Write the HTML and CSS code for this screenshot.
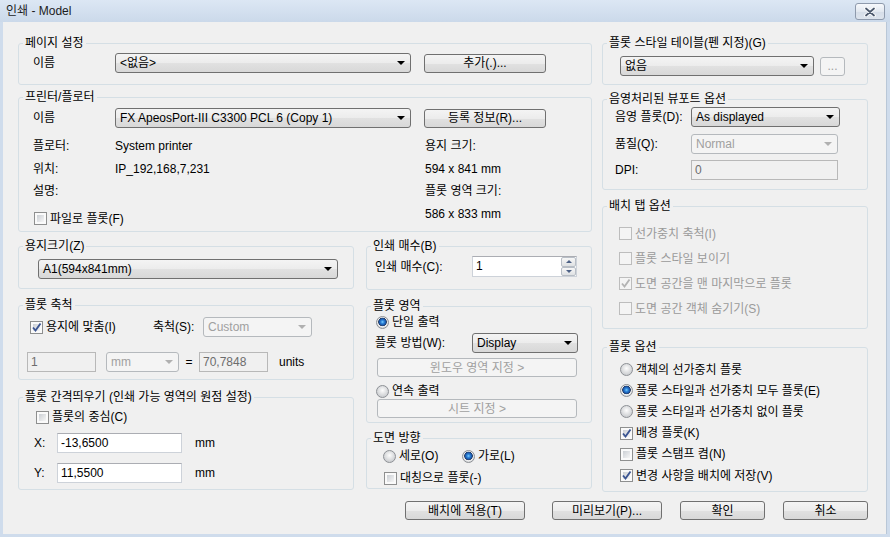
FILE: index.html
```html
<!DOCTYPE html>
<html lang="ko">
<head>
<meta charset="utf-8">
<title>인쇄 - Model</title>
<link rel="stylesheet" href="styles.css">
</head>
<body>
<div class="window">
  <div class="titlebar">
    <span class="title">인쇄 - Model</span>
    <span class="close"><svg width="12" height="10" viewBox="0 0 12 10"><path d="M2 1.5 L10 8.5 M10 1.5 L2 8.5" stroke="#ffffff" stroke-width="3.6" stroke-linecap="round"/><path d="M2 1.5 L10 8.5 M10 1.5 L2 8.5" stroke="#4b586c" stroke-width="1.8" stroke-linecap="round"/></svg></span>
  </div>
  <div class="client">
    <div class="main">
      <div class="left">
        <fieldset class="g-page">
          <legend>페이지 설정</legend>
          <div class="b-page">
            <div class="row">
              <span class="lbl w82">이름</span>
              <div class="combo w296"><span>&lt;없음&gt;</span></div>
              <div class="btn w122 ml13">추가(.)...</div>
            </div>
          </div>
        </fieldset>

        <fieldset class="g-printer">
          <legend>프린터/플로터</legend>
          <div class="b-printer">
            <div class="row">
              <span class="lbl w82">이름</span>
              <div class="combo w296 h21"><span>FX ApeosPort-III C3300 PCL 6 (Copy 1)</span></div>
              <div class="btn w122 ml13">등록 정보(R)...</div>
            </div>
            <div class="info">
              <div class="info-left">
                <div class="irow"><span class="lbl w82">플로터:</span><span>System printer</span></div>
                <div class="irow"><span class="lbl w82">위치:</span><span>IP_192,168,7,231</span></div>
                <div class="irow"><span class="lbl w82">설명:</span><span></span></div>
                <div class="irow cbrow-file"><span class="cb"></span><span class="cbl">파일로 플롯(F)</span></div>
              </div>
              <div class="info-right">
                <div class="irow">용지 크기:</div>
                <div class="irow">594 x 841 mm</div>
                <div class="irow">플롯 영역 크기:</div>
                <div class="irow">586 x 833 mm</div>
              </div>
            </div>
          </div>
        </fieldset>

        <div class="cols">
          <div class="colA">
            <fieldset class="g-paper">
              <legend>용지크기(Z)</legend>
              <div class="b-paper">
                <div class="combo w300"><span>A1(594x841mm)</span></div>
              </div>
            </fieldset>

            <fieldset class="g-scale">
              <legend>플롯 축척</legend>
              <div class="b-scale">
                <div class="row">
                  <div class="cbwrap-fit"><span class="cb"><svg width="11" height="11" viewBox="0 0 11 11"><path d="M2 5.5 L4.5 8.5 L9.5 1.5" stroke="#3b5592" stroke-width="1.9" fill="none"/></svg></span><span class="cbl">용지에 맞춤(I)</span></div>
                  <span class="lbl w50">축척(S):</span>
                  <div class="combo dis w109 h19"><span>Custom</span></div>
                </div>
                <div class="row scale-r2">
                  <div class="edit dis w69">1</div>
                  <div class="combo dis w73 ml10"><span>mm</span></div>
                  <span class="eq">=</span>
                  <div class="edit dis w69">70,7848</div>
                  <span class="units">units</span>
                </div>
              </div>
            </fieldset>

            <fieldset class="g-offset">
              <legend>플롯 간격띄우기 (인쇄 가능 영역의 원점 설정)</legend>
              <div class="b-offset">
                <div class="row cbrow-center"><span class="cb"></span><span class="cbl">플롯의 중심(C)</span></div>
                <div class="row xy-r1">
                  <span class="lbl w23">X:</span>
                  <div class="edit w125">-13,6500</div>
                  <span class="unit-mm">mm</span>
                </div>
                <div class="row xy-r2">
                  <span class="lbl w23">Y:</span>
                  <div class="edit w125">11,5500</div>
                  <span class="unit-mm">mm</span>
                </div>
              </div>
            </fieldset>
          </div>

          <div class="colB">
            <fieldset class="g-copies">
              <legend>인쇄 매수(B)</legend>
              <div class="b-copies">
                <div class="row">
                  <span class="lbl w97">인쇄 매수(C):</span>
                  <div class="spinbox">
                    <span class="spin-text">1</span>
                    <div class="spin"><span class="sb up"></span><span class="sb dn"></span></div>
                  </div>
                </div>
              </div>
            </fieldset>

            <fieldset class="g-area">
              <legend>플롯 영역</legend>
              <div class="b-area">
                <div class="row area-r1"><span class="rb on"></span><span class="cbl">단일 출력</span></div>
                <div class="row area-r2">
                  <span class="lbl w97">플롯 방법(W):</span>
                  <div class="combo w106 h19"><span>Display</span></div>
                </div>
                <div class="btn dis w200 area-b1">윈도우 영역 지정 &gt;</div>
                <div class="row area-r3"><span class="rb"></span><span class="cbl">연속 출력</span></div>
                <div class="btn dis w200 area-b2">시트 지정 &gt;</div>
              </div>
            </fieldset>

            <fieldset class="g-orient">
              <legend>도면 방향</legend>
              <div class="b-orient">
                <div class="row orient-r1">
                  <div class="rbwrap-v"><span class="rb"></span><span class="cbl">세로(O)</span></div>
                  <div class="row"><span class="rb on"></span><span class="cbl">가로(L)</span></div>
                </div>
                <div class="row orient-r2"><span class="cb"></span><span class="cbl">대칭으로 플롯(-)</span></div>
              </div>
            </fieldset>
          </div>
        </div>
      </div>

      <div class="right">
        <fieldset class="g-style">
          <legend>플롯 스타일 테이블(펜 지정)(G)</legend>
          <div class="b-style">
            <div class="row">
              <div class="combo w194 h19"><span>없음</span></div>
              <div class="btn dis w25 ml6">...</div>
            </div>
          </div>
        </fieldset>

        <fieldset class="g-shade">
          <legend>음영처리된 뷰포트 옵션</legend>
          <div class="b-shade">
            <div class="row">
              <span class="lbl w76">음영 플롯(D):</span>
              <div class="combo w149"><span>As displayed</span></div>
            </div>
            <div class="row shade-r2">
              <span class="lbl w76">품질(Q):</span>
              <div class="combo dis w147 h19"><span>Normal</span></div>
            </div>
            <div class="row shade-r3">
              <span class="lbl w76">DPI:</span>
              <div class="edit dis w147">0</div>
            </div>
          </div>
        </fieldset>

        <fieldset class="g-layout">
          <legend>배치 탭 옵션</legend>
          <div class="b-layout">
            <div class="row lrow"><span class="cb dis"></span><span class="cbl gray">선가중치 축척(I)</span></div>
            <div class="row lrow"><span class="cb dis"></span><span class="cbl gray">플롯 스타일 보이기</span></div>
            <div class="row lrow"><span class="cb dis"><svg width="11" height="11" viewBox="0 0 11 11"><path d="M2 5.5 L4.5 8.5 L9.5 1.5" stroke="#b4b4b4" stroke-width="1.9" fill="none"/></svg></span><span class="cbl gray">도면 공간을 맨 마지막으로 플롯</span></div>
            <div class="row lrow"><span class="cb dis"></span><span class="cbl gray">도면 공간 객체 숨기기(S)</span></div>
          </div>
        </fieldset>

        <fieldset class="g-plotopt">
          <legend>플롯 옵션</legend>
          <div class="b-plotopt">
            <div class="row prow"><span class="rb"></span><span class="cbl">객체의 선가중치 플롯</span></div>
            <div class="row prow"><span class="rb on"></span><span class="cbl">플롯 스타일과 선가중치 모두 플롯(E)</span></div>
            <div class="row prow"><span class="rb"></span><span class="cbl">플롯 스타일과 선가중치 없이 플롯</span></div>
            <div class="row prow"><span class="cb"><svg width="11" height="11" viewBox="0 0 11 11"><path d="M2 5.5 L4.5 8.5 L9.5 1.5" stroke="#3b5592" stroke-width="1.9" fill="none"/></svg></span><span class="cbl">배경 플롯(K)</span></div>
            <div class="row prow"><span class="cb"></span><span class="cbl">플롯 스탬프 켬(N)</span></div>
            <div class="row prow"><span class="cb"><svg width="11" height="11" viewBox="0 0 11 11"><path d="M2 5.5 L4.5 8.5 L9.5 1.5" stroke="#3b5592" stroke-width="1.9" fill="none"/></svg></span><span class="cbl">변경 사항을 배치에 저장(V)</span></div>
          </div>
        </fieldset>
      </div>
    </div>

    <div class="footer">
      <div class="btn w120 mr27">배치에 적용(T)</div>
      <div class="btn w110 mr18">미리보기(P)...</div>
      <div class="btn w85 mr18">확인</div>
      <div class="btn w85">취소</div>
    </div>
  </div>
</div>
</body>
</html>
```
FILE: styles.css
```css
* { box-sizing: border-box; }
html, body { margin: 0; padding: 0; }
body {
  font-family: "Liberation Sans", "Noto Sans CJK KR", sans-serif;
  font-size: 12px;
  color: #000;
  background: #f0f0f0;
}

.window {
  width: 890px;
  height: 537px;
  background: #cfdcec;
  display: flex;
  flex-direction: column;
  overflow: hidden;
}
.titlebar {
  height: 22px;
  flex: none;
  display: flex;
  align-items: center;
  justify-content: space-between;
  padding: 0 5px 0 6px;
  background: linear-gradient(#dce7f4, #cbd9ea);
}
.title { color: #1c1c1c; line-height: 14px; }
.close {
  width: 30px;
  height: 17px;
  margin-top: 1px;
  border: 1px solid #8e9aac;
  border-radius: 3px;
  background: linear-gradient(#f7f9fc, #e2e8f0 50%, #d5dde8 51%, #dde4ed);
  display: flex;
  align-items: center;
  justify-content: center;
}
.client {
  flex: 1;
  margin: 0 3px 3px;
  background: #f0f0f0;
  padding: 14px 18px 0 15px;
  border-right: 1px solid #b9c7d7;
}

.main { display: flex; gap: 10px; height: 456px; }
.left { width: 574px; display: flex; flex-direction: column; }
.right { width: 268px; display: flex; flex-direction: column; }
.cols { display: flex; gap: 12px; margin-top: 7px; }
.colA { width: 336px; display: flex; flex-direction: column; }
.colB { width: 226px; display: flex; flex-direction: column; }

fieldset {
  margin: 0;
  padding: 0;
  border: 1px solid #d5dfe5;
  border-radius: 3px;
  min-width: 0;
}
legend {
  margin-left: 4px;
  padding: 0 2px;
  line-height: 14px;
  height: 14px;
  color: #000;
}

/* group heights */
.g-page { height: 49px; }
.g-printer { height: 142px; margin-top: 5px; }
.g-paper { height: 50px; }
.g-scale { height: 82px; margin-top: 9px; }
.g-offset { height: 100px; margin-top: 10px; }
.g-copies { height: 51px; }
.g-area { height: 124px; margin-top: 9px; }
.g-orient { height: 58px; margin-top: 8px; }
.g-style { height: 49px; }
.g-shade { height: 98px; margin-top: 7px; }
.g-layout { height: 130px; margin-top: 9px; }
.g-plotopt { height: 152px; margin-top: 11px; }

/* generic */
.row { display: flex; align-items: center; }
.lbl { line-height: 14px; flex: none; white-space: nowrap; }
.cbl { line-height: 14px; margin-left: 3px; white-space: nowrap; }
.gray { color: #9a9a9a; }

.w23 { width: 23px; } .w25 { width: 25px; } .w50 { width: 50px; }
.w69 { width: 69px; } .w73 { width: 73px; } .w76 { width: 76px; }
.w82 { width: 82px; } .w85 { width: 85px; } .w97 { width: 97px; }
.w106 { width: 106px; } .w109 { width: 109px; } .w110 { width: 110px; }
.w120 { width: 120px; } .w122 { width: 122px; } .w125 { width: 125px; }
.w147 { width: 147px; } .w149 { width: 149px; } .w194 { width: 194px; }
.w200 { width: 200px; } .w296 { width: 296px; } .w300 { width: 300px; }
.ml6 { margin-left: 6px; } .ml10 { margin-left: 10px; } .ml13 { margin-left: 13px; }
.mr18 { margin-right: 18px; } .mr27 { margin-right: 27px; }
.h19 { height: 19px; } .h21 { height: 21px; }

/* controls */
.combo {
  height: 20px;
  flex: none;
  border: 1px solid #707070;
  border-radius: 3px;
  background: linear-gradient(#f4f4f4, #ececec 50%, #e1e1e1 51%, #d8d8d8);
  display: flex;
  align-items: center;
  justify-content: space-between;
  padding: 0 5px 0 4px;
  line-height: 14px;
  white-space: nowrap;
}
.combo::after {
  content: "";
  border-left: 4px solid transparent;
  border-right: 4px solid transparent;
  border-top: 4px solid #000;
  flex: none;
}
.combo.dis {
  border-color: #b5b9bd;
  background: #f4f4f4;
  color: #a0a0a0;
}
.combo.dis::after { border-top-color: #b0b0b0; }

.btn {
  height: 19px;
  flex: none;
  border: 1px solid #707070;
  border-radius: 3px;
  background: linear-gradient(#f4f4f4, #ececec 50%, #e1e1e1 51%, #d8d8d8);
  display: flex;
  align-items: center;
  justify-content: center;
  line-height: 14px;
  white-space: nowrap;
}
.btn.dis {
  border-color: #b5b9bd;
  background: #f4f4f4;
  color: #a0a0a0;
}

.edit {
  height: 20px;
  flex: none;
  background: #fff;
  border: 1px solid #cdd2d9;
  border-top-color: #abadb3;
  padding: 0 3px;
  display: flex;
  align-items: center;
  line-height: 14px;
}
.edit.dis {
  background: #f0f0f0;
  border-color: #b8b8b8;
  color: #6d6d6d;
}

.cb {
  width: 13px;
  height: 13px;
  flex: none;
  border: 1px solid #8e8f8f;
  padding: 2px;
  background: linear-gradient(135deg, #cbcfd4, #f6f6f6) content-box, #fafafa;
  display: flex;
  align-items: center;
  justify-content: center;
}
.cb svg { flex: none; }
.cb.dis {
  border-color: #bdbdbd;
  background: #f4f4f4;
}
.rb {
  width: 13px;
  height: 13px;
  flex: none;
  border-radius: 50%;
  border: 1px solid #8d9095;
  background: radial-gradient(circle at 50% 40%, #fdfdfd 0, #e6e7e8 3px, #cfd1d4 6px);
}
.rb.on {
  background: radial-gradient(circle at 50% 45%, #7fd0ff 0, #2f86db 1.6px, #1a54a5 3.3px, #2a3f63 4px, #f1f1f1 4.6px, #d4d6d9 6px);
}

/* page setup */
.b-page { padding: 3px 0 0 14px; }

/* printer */
.b-printer { padding: 4px 0 0 14px; }
.info { display: flex; margin-top: 7px; }
.info-left { width: 392px; }
.irow { height: 22.5px; display: flex; align-items: center; line-height: 14px; white-space: nowrap; }
.cbrow-file { margin-top: 5px; margin-left: 1px; }

/* paper */
.b-paper { padding: 6px 0 0 19px; }

/* scale */
.b-scale { padding: 5px 0 0 0; }
.b-scale > .row:first-child { height: 20px; }
.cbwrap-fit { width: 123px; margin-left: 11px; display: flex; align-items: center; flex: none; }
.scale-r2 { margin-top: 15px; margin-left: 8px; }
.eq { width: 20px; text-align: center; line-height: 14px; }
.units { margin-left: 11px; line-height: 14px; }

/* offset */
.b-offset { padding: 6px 0 0 0; }
.cbrow-center { margin-left: 17px; height: 14px; }
.xy-r1 { margin-top: 9px; margin-left: 15px; }
.xy-r2 { margin-top: 10px; margin-left: 15px; }
.unit-mm { margin-left: 13px; line-height: 14px; }

/* copies */
.b-copies { padding: 3px 0 0 8px; }
.spinbox {
  width: 105px;
  height: 21px;
  display: flex;
  background: #fff;
  border: 1px solid #cdd2d9;
  border-top-color: #abadb3;
}
.spin-text { flex: 1; padding: 2px 3px 0; line-height: 14px; }
.spin { width: 15px; display: flex; flex-direction: column; padding: 0; }
.sb {
  flex: 1;
  border: 1px solid #b8bec6;
  border-radius: 2px;
  background: linear-gradient(#f7f7f7, #dfe1e3);
  display: flex;
  align-items: center;
  justify-content: center;
}
.sb.up::after {
  content: "";
  border-left: 3px solid transparent;
  border-right: 3px solid transparent;
  border-bottom: 3px solid #4d6185;
}
.sb.dn::after {
  content: "";
  border-left: 3px solid transparent;
  border-right: 3px solid transparent;
  border-top: 3px solid #4d6185;
}

/* plot area */
.b-area { padding: 0 0 0 9px; }
.area-r1 { margin-top: 2px; height: 14px; }
.area-r2 { margin-top: 4px; margin-left: -1px; }
.area-b1 { margin-top: 5px; margin-left: 1px; }
.area-r3 { margin-top: 7px; height: 14px; }
.area-b2 { margin-top: 1px; margin-left: 1px; }

/* orientation */
.b-orient { padding: 4px 0 0 16px; }
.orient-r1 { height: 14px; }
.rbwrap-v { width: 79px; display: flex; align-items: center; flex: none; }
.orient-r2 { margin-top: 8px; margin-left: 1px; height: 14px; }

/* right column */
.b-style { padding: 6px 0 0 17px; }
.b-shade { padding: 1px 0 0 12px; }
.shade-r2 { margin-top: 7px; }
.shade-r3 { margin-top: 6px; }
.b-layout { padding: 8px 0 0 16px; }
.lrow { height: 25px; }
.b-plotopt { padding: 5px 0 0 17px; }
.prow { height: 21.2px; }

/* footer */
.footer {
  display: flex;
  justify-content: flex-end;
  margin-top: 9px;
}
```
